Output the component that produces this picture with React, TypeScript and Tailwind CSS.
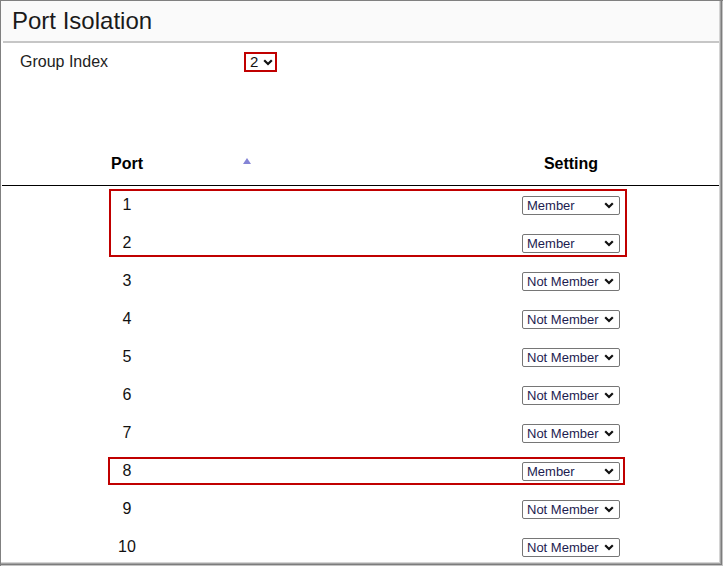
import React from 'react';

const ports = [
  { port: 1, setting: 'Member' },
  { port: 2, setting: 'Member' },
  { port: 3, setting: 'Not Member' },
  { port: 4, setting: 'Not Member' },
  { port: 5, setting: 'Not Member' },
  { port: 6, setting: 'Not Member' },
  { port: 7, setting: 'Not Member' },
  { port: 8, setting: 'Member' },
  { port: 9, setting: 'Not Member' },
  { port: 10, setting: 'Not Member' },
];

function Chevron({ className }: { className?: string }) {
  return (
    <svg
      className={className}
      width="10"
      height="7"
      viewBox="0 0 10 7"
      fill="none"
      stroke="#111"
      strokeWidth="2.2"
    >
      <path d="M1.2 1.2 L5 5 L8.8 1.2" />
    </svg>
  );
}

function SettingSelect({ value }: { value: string }) {
  return (
    <div className="relative w-[98px] h-[19px]">
      <select
        defaultValue={value}
        className="block appearance-none w-full h-full border border-[#767676] rounded-[2px] bg-white pl-[4px] pr-[14px] text-[13px] leading-[17px] text-[#1c1c50] outline-none"
      >
        <option>Member</option>
        <option>Not Member</option>
      </select>
      <Chevron className="absolute right-[6px] top-[6px] pointer-events-none" />
    </div>
  );
}

export default function App() {
  return (
    <div
      className="w-[723px] h-[566px] border-l border-t border-[#808080] pr-[4px] pb-[4px] bg-white shadow-[inset_-1px_-1px_0_#c4c4c4,inset_-2px_-2px_0_#7c7c7c,inset_-3px_-3px_0_#a4a4a4,inset_-4px_-4px_0_#d4d4d4]"
      style={{ fontFamily: '"Liberation Sans", Arial, sans-serif' }}
    >
      <div className="w-full h-full overflow-hidden bg-white">
        {/* title bar */}
        <div className="h-[40px] bg-[#fafafa] flex items-center pl-[11px]">
          <h1 className="text-[24px] leading-[28px] text-[#1a1a1a]">Port Isolation</h1>
        </div>
        <div className="h-[2px] ml-[2px] bg-[#c6c6c6]" />

        {/* group index */}
        <div className="flex items-center h-[20px] mt-[9px] pl-[19px]">
          <div className="w-[224px] text-[16px] text-[#222]">Group Index</div>
          <div className="relative w-[33px] h-[20px]">
            <select
              defaultValue="2"
              className="block appearance-none w-full h-full border-2 border-[#c00000] bg-white pl-[4px] text-[15px] leading-[16px] text-[#111] outline-none"
            >
              <option>1</option>
              <option>2</option>
              <option>3</option>
            </select>
            <Chevron className="absolute right-[4px] top-[7px] pointer-events-none" />
          </div>
        </div>

        {/* table header */}
        <div className="grid grid-cols-[252px_1fr_298px] h-[44px] mt-[69px] items-center text-[16px] font-bold text-black">
          <div className="relative h-full flex items-center justify-center pt-[1px]">
            Port
            <span className="absolute right-[2px] top-[17px] w-0 h-0 border-l-[4px] border-r-[4px] border-b-[6px] border-l-transparent border-r-transparent border-b-[#8484d6]" />
          </div>
          <div />
          <div className="text-center pt-[1px] pl-[2px]">Setting</div>
        </div>
        <div className="h-px ml-[1px] bg-black" />

        {/* rows */}
        <div className="relative">
          {ports.map((p) => (
            <div
              key={p.port}
              className="grid grid-cols-[252px_1fr_298px] h-[38px] items-center text-[16px] text-[#111]"
            >
              <div className="text-center">{p.port}</div>
              <div />
              <div className="flex justify-center pl-[2px]">
                <SettingSelect value={p.setting} />
              </div>
            </div>
          ))}
          <div className="absolute left-[108px] top-[3px] w-[518px] h-[68px] border-2 border-[#c00000] pointer-events-none" />
          <div className="absolute left-[107px] top-[271px] w-[517px] h-[28px] border-2 border-[#c00000] pointer-events-none" />
        </div>
      </div>
    </div>
  );
}
